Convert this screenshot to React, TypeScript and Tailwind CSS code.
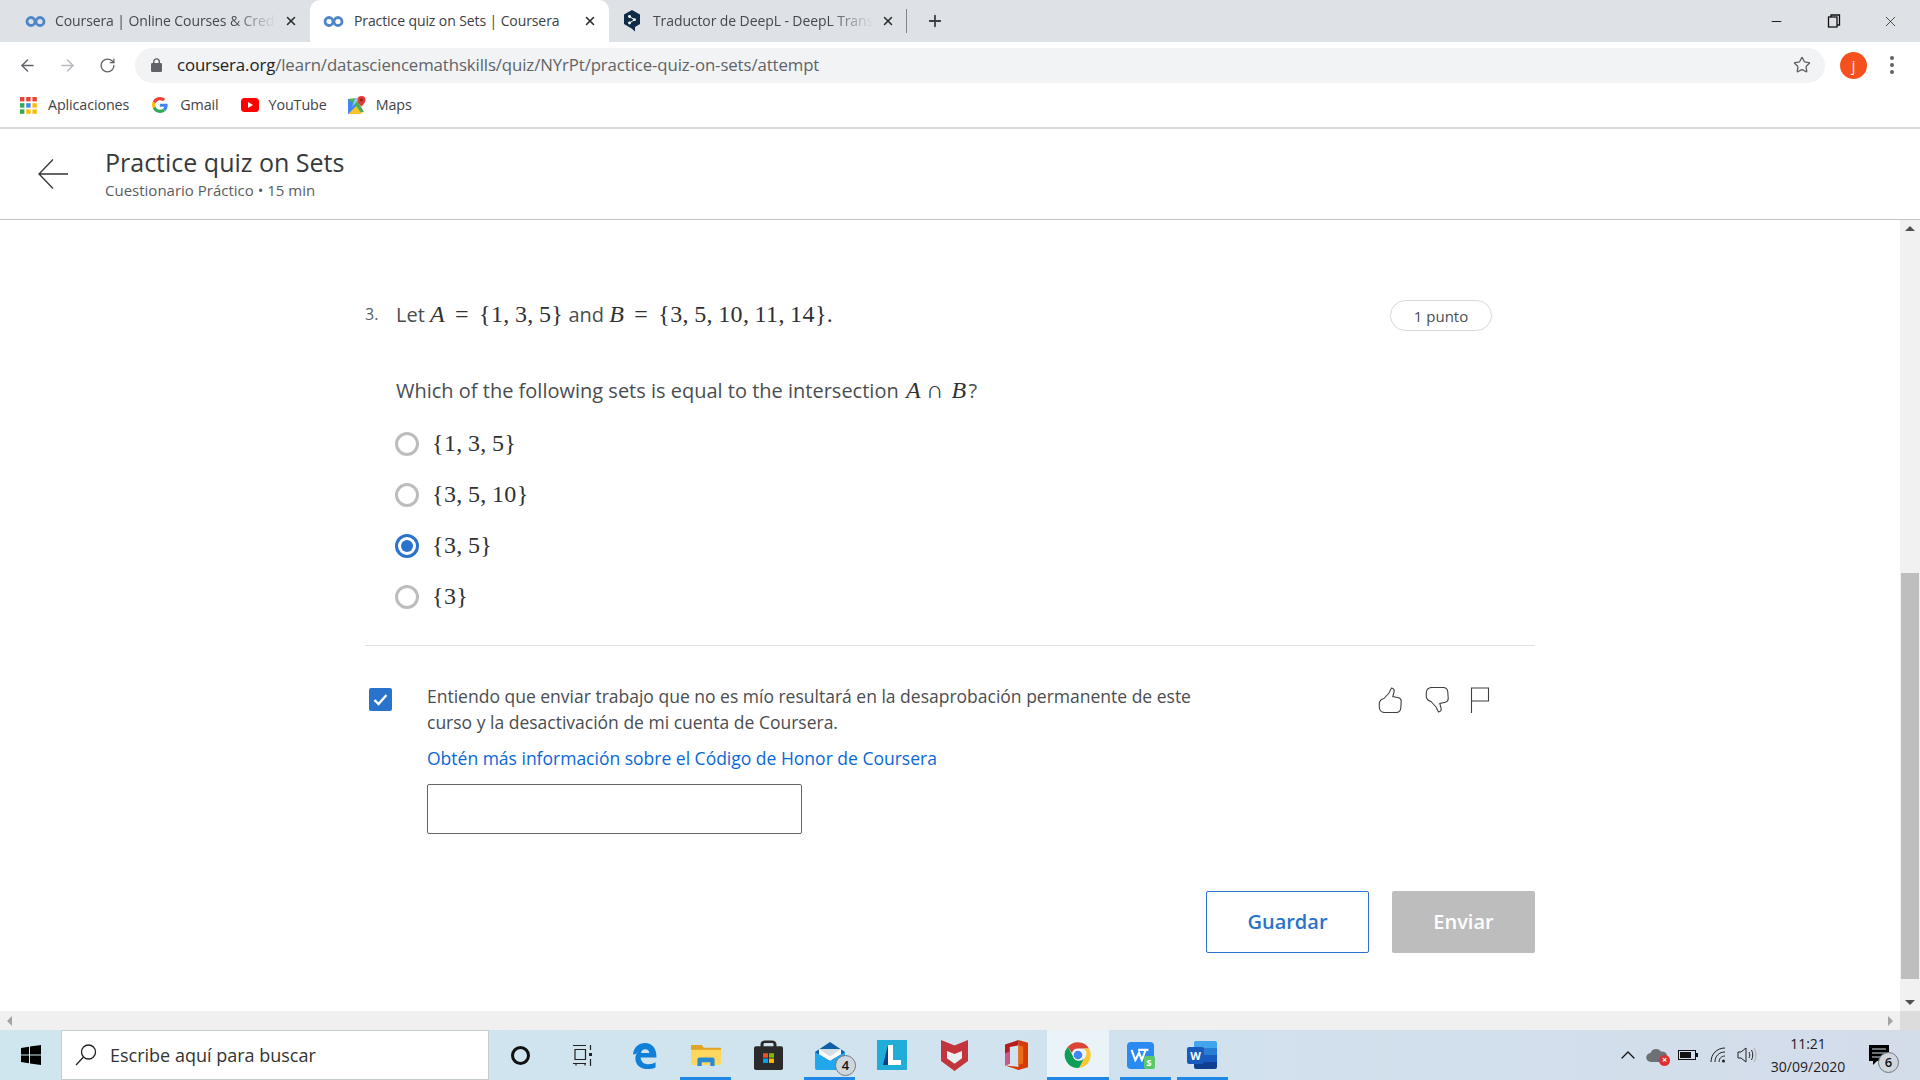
import React from "react";
import { ArrowLeft, ArrowRight, RotateCw, Star, X, Plus, Minus, ChevronUp } from "lucide-react";

const Inf = () => (
  <svg width="21" height="11" viewBox="0 0 21 11" fill="none" stroke="#4f86c6" strokeWidth="2.8">
    <circle cx="6" cy="5.500" r="4" />
    <circle cx="15" cy="5.500" r="4" />
  </svg>
);

const DeepL = () => (
  <svg width="18" height="22" viewBox="0 0 18 22">
    <path d="M9 0l8 4.6v9.4l-5 3v4.6l-3-2.8-8-4.8V4.6z" fill="#0f2b46" />
    <circle cx="6.5" cy="6.5" r="1.4" fill="#fff" />
    <circle cx="6.5" cy="13" r="1.4" fill="#fff" />
    <circle cx="11.5" cy="9.7" r="1.4" fill="#fff" />
    <path d="M6.5 6.5l5 3.2-5 3.3" stroke="#fff" strokeWidth="1" fill="none" />
  </svg>
);

const Apps = () => (
  <svg width="17" height="17" viewBox="0 0 17 17">
    {["#ea4335", "#ea4335", "#ea4335", "#34a853", "#4285f4", "#fbbc05", "#34a853", "#fbbc05", "#fbbc05"].map((c, i) => (
      <rect key={i} x={(i % 3) * 6.2} y={Math.floor(i / 3) * 6.2} width="4.4" height="4.4" fill={c} />
    ))}
  </svg>
);

const G = () => (
  <svg width="16" height="16" viewBox="0 0 48 48">
    <path fill="#EA4335" d="M24 9.5c3.5 0 6.700 1.300 9.100 3.400l6.800-6.800C35.800 2.400 30.300 0 24 0 14.600 0 6.500 5.400 2.600 13.200l7.900 6.200C12.400 13.600 17.700 9.500 24 9.500z" />
    <path fill="#4285F4" d="M47 24.500c0-1.600-.1-3.100-.4-4.500H24v9h13c-.6 3-2.300 5.500-4.800 7.200l7.700 6C44.400 37.900 47 31.800 47 24.500z" />
    <path fill="#FBBC05" d="M10.500 28.600c-.5-1.400-.8-3-.8-4.600s.3-3.200.8-4.600l-7.900-6.200C.9 16.500 0 20.100 0 24s.9 7.500 2.600 10.800z" />
    <path fill="#34A853" d="M24 48c6.500 0 11.900-2.100 15.900-5.800l-7.700-6c-2.200 1.400-4.900 2.300-8.200 2.300-6.300 0-11.600-4.100-13.500-9.900l-7.900 6.200C6.500 42.600 14.600 48 24 48z" />
  </svg>
);

const YT = () => (
  <svg width="18" height="14" viewBox="0 0 18 14">
    <rect width="18" height="14" rx="3.500" fill="#f00" />
    <path d="M7 4l5 3-5 3z" fill="#fff" />
  </svg>
);

const Maps = () => (
  <svg width="18" height="18" viewBox="0 0 18 18">
    <path d="M0 3l8-1 8 14-13 2H0z" fill="#4caf50" />
    <path d="M0 18l8-8 6 8z" fill="#fbc02d" />
    <path d="M0 3l8 7-8 8z" fill="#4285f4" />
    <path d="M7 2h5l-8 9z" fill="#90caf9" />
    <path d="M13.500 0a4 4 0 014 4c0 2.800-4 6.500-4 6.500S9.500 6.800 9.500 4a4 4 0 014-4z" fill="#e53935" />
    <circle cx="13.500" cy="4" r="1.400" fill="#8e1c14" />
  </svg>
);

const Tab = ({ icon, title, active, w, fade, gap }: { icon: React.ReactNode; title: string; active?: boolean; w: string; fade?: boolean; gap: string }) => (
  <div className={`${w} h-[42px] flex items-center pl-[14px] pr-[12px] ${active ? "bg-white rounded-t-[10px] text-[#3c4043]" : "text-[#45484d]"}`}>
    <div className={`w-[26px] shrink-0 flex items-center justify-center -ml-[4px] ${gap}`}>{icon}</div>
    <div className={`flex-1 -mt-[1px] overflow-hidden whitespace-nowrap text-[14px] tracking-[-0.1px] ${fade ? "[mask-image:linear-gradient(to_right,black_80%,transparent_100%)]" : ""}`}>{title}</div>
    <X size={14} strokeWidth={2.6} className="text-[#2a2c30] shrink-0 ml-[8px]" />
  </div>
);

const Bookmark = ({ icon, label, ml }: { icon: React.ReactNode; label: string; ml: string }) => (
  <div className={`flex items-center ${ml}`}>
    <div className="w-[28px] flex items-center">{icon}</div>
    <span className="text-[14.300px] text-[#3f4246] tracking-[-0.1px]">{label}</span>
  </div>
);

const M = ({ children }: { children: React.ReactNode }) => (
  <span className="font-['Liberation_Serif'] text-[24px] tracking-[0.4px] text-[#2f3133]">{children}</span>
);
const I = ({ children }: { children: React.ReactNode }) => <i className="italic">{children}</i>;
const Eq = () => <span className="mx-[10px]">=</span>;

const Radio = ({ checked, children }: { checked?: boolean; children: React.ReactNode }) => (
  <div className="h-[51px] flex items-center">
    <div className={`w-[24px] h-[24px] rounded-full border-[3px] flex items-center justify-center ${checked ? "border-[#2a73cc]" : "border-[#bdbdbd]"}`}>
      {checked && <div className="w-[12px] h-[12px] rounded-full bg-[#2a73cc]" />}
    </div>
    <div className="ml-[13px] leading-[30px]"><M>{children}</M></div>
  </div>
);

const Thumb = ({ down }: { down?: boolean }) => (
  <svg width="24" height="26" viewBox="0 0 24 26" fill="none" stroke="#3c4043" strokeWidth="1.100" className={down ? "rotate-180 -scale-x-100" : ""}>
    <path d="M6 11.500L11 6 13.500 1c1.700.3 2.800 1.300 2.800 3L14.800 9.500l5.700 1.300c2 .6 2.800 1.800 2.700 3.700l-.4 6.500c-.3 3-2 4.500-4.800 4.500H7c-3 0-5-1.500-5.500-4-.4-2.500-.3-5 .2-6.800.6-1.600 2.300-2.700 4.300-3.200z" />
  </svg>
);

const Slot = ({ children, w = "w-[62px]", under, bg }: { children?: React.ReactNode; w?: string; under?: string; bg?: string }) => (
  <div className={`relative ${w} h-[50px] flex items-center justify-center shrink-0 ${bg ?? ""}`}>
    {children}
    {under && <div className={`absolute bottom-0 h-[3px] bg-[#2087e6] ${under}`} />}
  </div>
);

const Edge = () => (
  <svg width="25" height="27" viewBox="0 0 26 28" preserveAspectRatio="none">
    <path d="M1 13C2 5 7 1 13.500 1 21 1 25.500 6.500 25.500 16H9c.3 5 4 7 8 7 3 0 5.500-.8 7.500-2v5.500c-2.500 1.200-5.500 1.500-8 1.500C8 28 3.500 23 3.500 17c0-3 1-6 4-8-1.500 1-2.500 2-3.500 3.500z" fill="#0f7fd8" />
    <path d="M9.300 11.500c.4-2.500 2-4 4.500-4s4 1.500 4.200 4z" fill="#cfe3ee" />
  </svg>
);

const Folder = () => (
  <svg width="30" height="24" viewBox="0 0 28 25" preserveAspectRatio="none">
    <path d="M0 2h10l2 3h16v7H0z" fill="#e0a324" />
    <path d="M0 7h28v14a2 2 0 01-2 2H0z" fill="#ffd75e" />
    <path d="M6 24v-7a2 2 0 012-2h12a2 2 0 012 2v7h-4v-4h-8v4z" fill="#2a8ad4" />
  </svg>
);

const Store = () => (
  <svg width="29" height="30" viewBox="0 0 29 34" preserveAspectRatio="none">
    <path d="M8 8V5a3 3 0 013-3h7a3 3 0 013 3v3" fill="none" stroke="#2b2b2b" strokeWidth="3" />
    <rect y="7" width="29" height="27" rx="2" fill="#2b2b2b" />
    <rect x="9" y="15" width="5" height="5" fill="#f25022" />
    <rect x="15" y="15" width="5" height="5" fill="#7fba00" />
    <rect x="9" y="21" width="5" height="5" fill="#00a4ef" />
    <rect x="15" y="21" width="5" height="5" fill="#ffb900" />
  </svg>
);

const Mail = () => (
  <svg width="30" height="29" viewBox="0 0 30 32" preserveAspectRatio="none">
    <path d="M0 12L15 1l15 11v10H0z" fill="#0f5ea8" />
    <path d="M4 9h22v6L15 22 4 15z" fill="#fff" />
    <path d="M4 9h22L15 17z" fill="#d6dde3" />
    <path d="M0 12l15 10 15-10v18a2 2 0 01-2 2H2a2 2 0 01-2-2z" fill="#22a8ea" />
  </svg>
);

const LIcon = () => (
  <svg width="30" height="30" viewBox="0 0 30 30">
    <rect width="30" height="30" fill="#22acd8" />
    <path d="M11 5L6 25h6z" fill="#0b3f8a" />
    <path d="M11 5h5v15h8v5H11z" fill="#fff" />
  </svg>
);

const McAfee = () => (
  <svg width="27" height="31" viewBox="0 0 27 34" preserveAspectRatio="none">
    <path d="M0 0l13.500 6L27 0v23L13.500 34 0 23z" fill="#c4343c" />
    <path d="M6 12l7.500 3.300L21 12v8l-7.500 6L6 20z" fill="#e9f0f4" />
  </svg>
);

const Office = () => (
  <svg width="23" height="30" viewBox="0 0 24 34" preserveAspectRatio="none">
    <path d="M14 0l10 3v28l-10 3-14-5 14 1.500z" fill="#d83b01" />
    <path d="M14 0L0 5v24l5-2V8l9-2z" fill="#b71c1c" />
    <path d="M14 6l5 1.500v19L14 28z" fill="#eb6c19" />
    <path d="M0 15l5-2v14l-5 2z" fill="#c75a8a" />
  </svg>
);

const Chrome = () => (
  <svg width="28" height="28" viewBox="0 0 48 48">
    <path d="M24 2a22 22 0 0119 11H24a11 11 0 00-10.500 7.500L6.500 10A22 22 0 0124 2z" fill="#db4437" />
    <path d="M43 13a22 22 0 01-17 33l9-16a11 11 0 00-1-17z" fill="#fcc934" />
    <path d="M6.500 10l9 16a11 11 0 0019 4L26 46A22 22 0 016.500 10z" fill="#0f9d58" />
    <circle cx="24" cy="24" r="9" fill="#fff" />
    <circle cx="24" cy="24" r="7.500" fill="#4285f4" />
  </svg>
);

const Wps = () => (
  <div className="relative w-[27px] h-[27px] rounded-[4px] bg-[#2b8af2] flex items-center justify-center">
    <svg width="20" height="14" viewBox="0 0 20 15" fill="none" stroke="#fff" strokeWidth="2.200">
      <path d="M1 2l4 11 4-8 3 8 4-11M8 2h11" />
    </svg>
    <div className="absolute -right-[1px] -bottom-[0px] w-[11px] h-[13px] rounded-[2px] bg-[#59c96b] text-white text-[10px] leading-[13px] text-center font-bold">s</div>
  </div>
);

const Word = () => (
  <div className="relative w-[30px] h-[28px]">
    <div className="absolute right-0 top-0 w-[23px] h-[28px] rounded-[2px] flex flex-col overflow-hidden">
      <div className="h-[7px] bg-[#41a5ee]" />
      <div className="h-[7px] bg-[#2b7cd3]" />
      <div className="h-[7px] bg-[#185abd]" />
      <div className="h-[7px] bg-[#103f91]" />
    </div>
    <div className="absolute left-0 top-[6px] w-[17px] h-[17px] rounded-[2px] bg-[#185abd] text-white text-[11px] leading-[17px] text-center font-bold">W</div>
  </div>
);

const Badge = ({ n, cls }: { n: string; cls: string }) => (
  <div className={`absolute w-[21px] h-[21px] rounded-full bg-[#cfd6dc] border border-[#6f7880] text-[#111] text-[13px] leading-[19px] text-center font-semibold ${cls}`}>{n}</div>
);

export default function App() {
  return (
    <div className="w-[1920px] h-[1080px] flex flex-col overflow-hidden bg-white font-['Open_Sans',sans-serif]">
      {/* Tab strip */}
      <div className="h-[42px] shrink-0 bg-[#dee1e6] flex items-center">
        <div className="w-[12px]" />
        <Tab icon={<Inf />} title="Coursera | Online Courses & Credentials" w="w-[298px]" fade gap="mr-[7px]" />
        <Tab icon={<Inf />} title="Practice quiz on Sets | Coursera" active w="w-[299px]" gap="mr-[8px]" />
        <Tab icon={<DeepL />} title="Traductor de DeepL - DeepL Translate" w="w-[298px]" fade gap="mr-[8px]" />
        <div className="w-px h-[24px] bg-[#7f8388] -ml-[1px]" />
        <Plus size={18} strokeWidth={2.4} className="ml-[19px] text-[#3c4043]" />
        <div className="ml-auto mr-[1px] flex items-center text-[#111]">
          <div className="w-[57px] flex justify-center"><Minus size={15} strokeWidth={1.500} /></div>
          <div className="w-[57px] flex justify-center">
            <svg width="14" height="14" viewBox="0 0 14 14" fill="none" stroke="#111" strokeWidth="1.300"><rect x="1.500" y="3" width="8.500" height="10" /><path d="M4 3V1h8.500v10H10" /></svg>
          </div>
          <div className="w-[57px] flex justify-center"><X size={17} strokeWidth={1} /></div>
        </div>
      </div>
      {/* Toolbar */}
      <div className="h-[46px] shrink-0 flex items-center">
        <div className="w-[135px] flex items-center text-[#5f6368]">
          <ArrowLeft size={19} strokeWidth={1.800} className="ml-[18px]" />
          <ArrowRight size={19} strokeWidth={1.800} className="ml-[21px] text-[#b5b8bc]" />
          <RotateCw size={17} strokeWidth={1.800} className="ml-[22px]" />
        </div>
        <div className="w-[1690px] h-[35px] rounded-full bg-[#f1f3f4] flex items-center pl-[16px] pr-[14px]">
          <svg width="11" height="14" viewBox="0 0 11 14" className="shrink-0">
            <rect y="5" width="11" height="9" rx="1.200" fill="#5f6368" />
            <path d="M2.700 5.500V3.700a2.800 2.800 0 015.600 0v1.800" fill="none" stroke="#5f6368" strokeWidth="1.400" />
          </svg>
          <div className="ml-[15px] text-[16.800px] tracking-[-0.1px] text-[#5f6368]"><span className="text-[#202124]">coursera.org</span>/learn/datasciencemathskills/quiz/NYrPt/practice-quiz-on-sets/attempt</div>
          <Star size={18} strokeWidth={1.800} className="ml-auto text-[#5f6368]" />
        </div>
        <div className="ml-[15px] w-[27px] h-[27px] rounded-full bg-[#f4511e] text-white text-[14px] leading-[27px] text-center">j</div>
        <div className="ml-[23px] flex flex-col gap-[3px]">
          <div className="w-[4px] h-[4px] rounded-full bg-[#5f6368]" />
          <div className="w-[4px] h-[4px] rounded-full bg-[#5f6368]" />
          <div className="w-[4px] h-[4px] rounded-full bg-[#5f6368]" />
        </div>
      </div>
      {/* Bookmarks */}
      <div className="h-[41px] shrink-0 flex items-center pl-[20px] pb-[5px] border-b-2 border-[#d9dadd]">
        <Bookmark icon={<Apps />} label="Aplicaciones" ml="" />
        <Bookmark icon={<G />} label="Gmail" ml="ml-[23px]" />
        <Bookmark icon={<YT />} label="YouTube" ml="ml-[22px]" />
        <Bookmark icon={<Maps />} label="Maps" ml="ml-[21px]" />
      </div>
      {/* Page header */}
      <div className="h-[91px] shrink-0 flex items-center border-b border-[#c4c4c4]">
        <svg width="32" height="32" viewBox="0 0 32 32" fill="none" stroke="#333" strokeWidth="1.300" className="ml-[37px]"><path d="M31 16H2M16 1.500L2 16l14 14.500" /></svg>
        <div className="ml-[36px] -mt-[2px]">
          <div className="-mt-[1px] text-[25px] leading-[32px] text-[#373a3c]">Practice quiz on Sets</div>
          <div className="text-[15px] leading-[20px] mt-[2px] text-[#5a5d60]">Cuestionario Práctico • 15 min</div>
        </div>
      </div>
      {/* Viewport */}
      <div className="flex-1 flex min-h-0">
        <div className="flex-1 pl-[365px] overflow-hidden">
          <div className="w-[1170px] text-[#373a3c]">
            <div className="pt-[77px] flex items-start">
              <div className="w-[31px] text-[16px] leading-[34px] text-[#5a5d60]">3.</div>
              <div className="flex-1 text-[20px] leading-[34px] text-[#4a4d50] whitespace-nowrap">
                Let <M><I>A</I><Eq />{"{1,\u20093,\u20095}"}</M> and <M><I>B</I><Eq />{"{3,\u20095,\u200910,\u200911,\u200914}"}.</M>
              </div>
              <div className="mt-[3px] mr-[43px] w-[102px] h-[31px] rounded-full border border-[#d9d9d9] text-center text-[15px] leading-[30px] text-[#4a4d50]">1 punto</div>
            </div>
            <div className="pl-[31px] pt-[41px] text-[20px] leading-[34px] text-[#4a4d50]">
              Which of the following sets is equal to the intersection <span className="ml-[2px]"><M><I>A</I>{"\u2009∩\u2009\u200A"}<I>B</I></M></span><span className="ml-[2px]">?</span>
            </div>
            <div className="pl-[30px] pt-[10px]">
              <Radio>{"{1,\u20093,\u20095}"}</Radio>
              <Radio>{"{3,\u20095,\u200910}"}</Radio>
              <Radio checked>{"{3,\u20095}"}</Radio>
              <Radio>{"{3}"}</Radio>
            </div>
            <div className="mt-[23px] border-t border-[#e0e0e0]" />
            <div className="pt-[29px] flex items-start">
              <div className="ml-[4px] mt-[13px] w-[23px] h-[23px] rounded-[2px] bg-[#2a73cc] flex items-center justify-center">
                <svg width="15" height="12" viewBox="0 0 15 12" fill="none" stroke="#fff" strokeWidth="2.400"><path d="M1.500 6l4 4 8-9" /></svg>
              </div>
              <div className="ml-[35px] w-[790px] mt-[8px]">
                <div className="text-[17.500px] leading-[26px] text-[#4a4d50]">Entiendo que enviar trabajo que no es mío resultará en la desaprobación permanente de este curso y la desactivación de mi cuenta de Coursera.</div>
                <div className="mt-[10px] text-[17.500px] leading-[26px] text-[#0b67d6]">Obtén más información sobre el Código de Honor de Coursera</div>
                <div className="mt-[13px] w-[375px] h-[50px] rounded-[2px] border border-[#666] bg-white" />
              </div>
              <div className="ml-[161px] mt-[12px] flex items-start">
                <Thumb />
                <div className="ml-[23px]"><Thumb down /></div>
                <svg width="20" height="26" viewBox="0 0 20 26" fill="none" stroke="#3c4043" strokeWidth="1.100" className="ml-[21px]"><path d="M1.500 26V1h17v13H1.500" /></svg>
              </div>
            </div>
            <div className="pt-[57px] flex justify-end">
              <div className="w-[163px] h-[62px] rounded-[2px] border border-[#2a73cc] text-[#2a73cc] text-[20px] font-semibold flex items-center justify-center">Guardar</div>
              <div className="ml-[23px] w-[143px] h-[62px] rounded-[2px] bg-[#bdbdbd] text-white text-[20px] font-semibold flex items-center justify-center">Enviar</div>
            </div>
          </div>
        </div>
        {/* Vertical scrollbar */}
        <div className="w-[20px] shrink-0 bg-[#f1f1f1] flex flex-col items-center">
          <div className="h-[17px] flex items-center justify-center">
            <div className="w-0 h-0 border-x-[5px] border-x-transparent border-b-[5px] border-b-[#505050]" />
          </div>
          <div className="h-[336px]" />
          <div className="w-[18px] h-[406px] bg-[#bebebe]" />
          <div className="flex-1 flex items-end pb-[6px]">
            <div className="w-0 h-0 border-x-[5px] border-x-transparent border-t-[5px] border-t-[#505050]" />
          </div>
        </div>
      </div>
      {/* Horizontal scrollbar */}
      <div className="h-[19px] shrink-0 flex bg-[#f0f0f0]">
        <div className="flex-1 flex items-center justify-between px-[7px]">
          <div className="w-0 h-0 border-y-[5px] border-y-transparent border-r-[5px] border-r-[#a3a3a3]" />
          <div className="w-0 h-0 border-y-[5px] border-y-transparent border-l-[5px] border-l-[#a3a3a3]" />
        </div>
        <div className="w-[20px] bg-[#dcdcdc]" />
      </div>
      {/* Taskbar */}
      <div className="h-[50px] shrink-0 flex items-center bg-gradient-to-r from-[#cfe6ef] via-[#d0e3ee] to-[#d4dcea]">
        <Slot w="w-[61px]">
          <svg width="20" height="20" viewBox="0 0 20 20" fill="#000"><path d="M0 3l8-1.200V9.500H0zM9 1.600L20 0v9.500H9zM0 10.500h8v7.700L0 17zM9 10.500h11V20L9 18.400z" /></svg>
        </Slot>
        <div className="w-[428px] h-[50px] shrink-0 bg-white border border-[#c5ccd0] flex items-center pl-[12px]">
          <svg width="24" height="24" viewBox="0 0 24 24" fill="none" stroke="#222" strokeWidth="1.300"><circle cx="14.500" cy="9" r="7" /><path d="M9.500 14L2 22" /></svg>
          <span className="ml-[12px] text-[18px] text-[#333]">Escribe aquí para buscar</span>
        </div>
        <Slot><div className="w-[19px] h-[19px] rounded-full border-[3px] border-[#111]" /></Slot>
        <Slot>
          <svg width="20" height="22" viewBox="0 0 20 22" fill="none" stroke="#222" strokeWidth="1.200"><path d="M1 1.500h13M3 5.500h10.500v10H3zM1 19.500h13M4 21.500v-2M13 21.500v-2M18.500 1v5M18.500 15v7" /><rect x="17" y="9" width="3" height="3" fill="#222" stroke="none" /></svg>
        </Slot>
        <Slot><Edge /></Slot>
        <Slot under="w-[51px] left-[5px]"><Folder /></Slot>
        <Slot><Store /></Slot>
        <Slot under="w-[51px] left-[5px]">
          <div className="relative flex"><Mail /><Badge n="4" cls="-right-[11px] -bottom-[6px]" /></div>
        </Slot>
        <Slot><LIcon /></Slot>
        <Slot><McAfee /></Slot>
        <Slot><Office /></Slot>
        <Slot under="w-full left-0" bg="bg-[#eaf3f8]"><Chrome /></Slot>
        <Slot under="w-[51px] left-[11px]"><Wps /></Slot>
        <Slot under="w-[51px] left-[6px]"><Word /></Slot>
        <div className="ml-auto flex items-center h-[50px]">
          <ChevronUp size={24} strokeWidth={1.300} className="text-[#111]" />
          <div className="relative ml-[6px] w-[22px] h-[16px]">
            <svg width="22" height="16" viewBox="0 0 22 16"><path d="M5 15a4.500 4.500 0 01-.5-9A6 6 0 0115 4.500 5 5 0 0117 15z" fill="#6e7174" /></svg>
            <div className="absolute -right-[2px] -bottom-[3px] w-[11px] h-[11px] rounded-full bg-[#e03131] text-white text-[9px] leading-[10px] text-center font-bold">×</div>
          </div>
          <svg width="20" height="10" viewBox="0 0 20 10" className="ml-[10px]" fill="none" stroke="#111"><rect x=".500" y=".500" width="17" height="9" /><rect x="2" y="2" width="11" height="6" fill="#111" stroke="none" /><rect x="18" y="3" width="2" height="4" fill="#111" stroke="none" /></svg>
          <svg width="16" height="16" viewBox="0 0 16 16" className="ml-[12px]" fill="none" stroke="#222" strokeWidth="1"><path d="M1 15C1 7 7 1 15 1M5 15c0-6 4-10 10-10M9 15c0-3 2-6 6-6" /><circle cx="13.500" cy="14" r="1.500" fill="#222" stroke="none" /></svg>
          <svg width="20" height="16" viewBox="0 0 20 16" className="ml-[11px]" fill="none" stroke="#222" strokeWidth="1"><path d="M1 5h3l5-4v14l-5-4H1zM12 5c1 2 1 4 0 6M14.500 3c1.700 3 1.700 7 0 10" /><path d="M17 1c2.500 4 2.500 10 0 14" stroke="#aaa" /></svg>
          <div className="ml-[6px] w-[90px] text-center text-[14px] leading-[23px] text-[#222]">
            <div>11:21</div>
            <div>30/09/2020</div>
          </div>
          <div className="relative ml-[16px] mr-[31px] w-[20px] h-[20px]">
            <svg width="20" height="20" viewBox="0 0 20 20"><path d="M0 0h20v16H8l-4 4v-4H0z" fill="#000" /><path d="M3 4h14M3 8h14M3 12h14" stroke="#d4dcea" strokeWidth="1" /></svg>
            <Badge n="6" cls="-right-[10px] -bottom-[8px]" />
          </div>
        </div>
      </div>
    </div>
  );
}
